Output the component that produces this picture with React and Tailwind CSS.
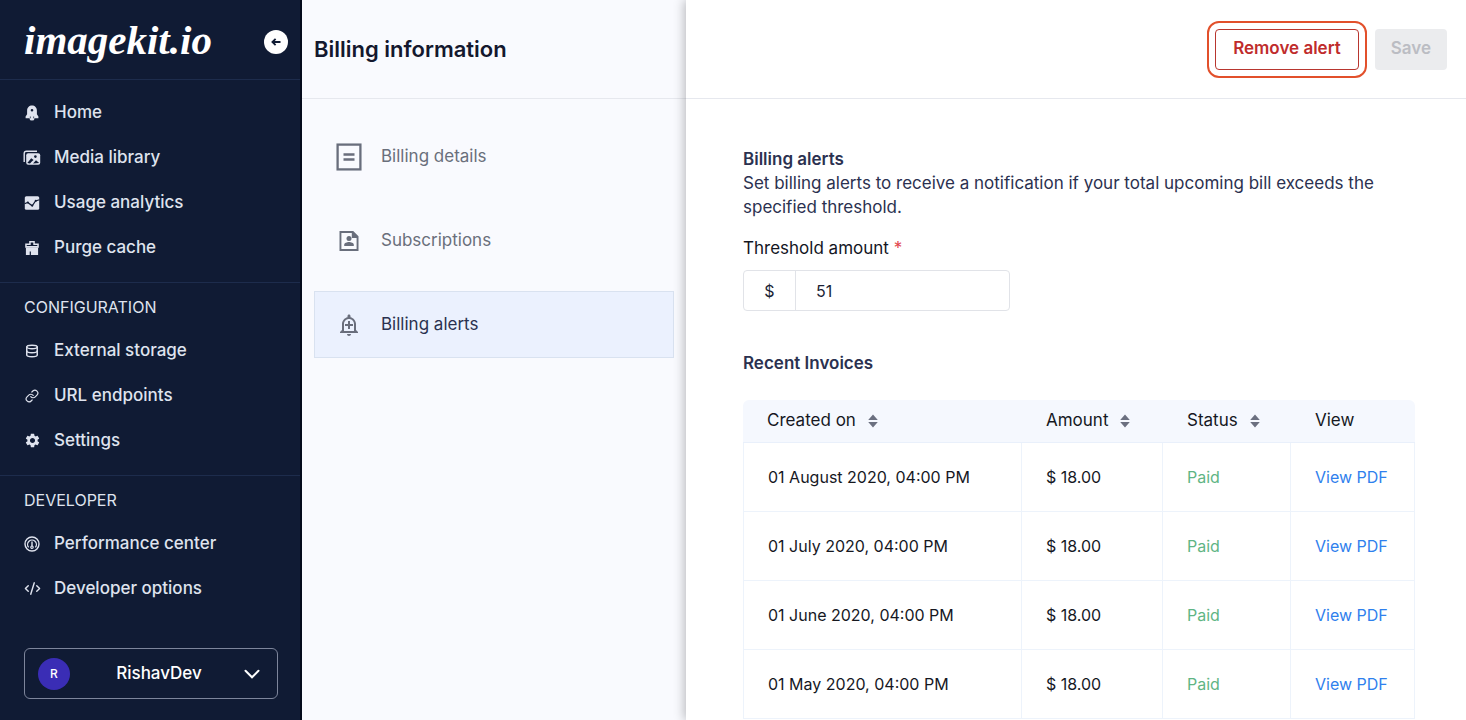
import { Link as LinkIcon, CodeXml, Database } from "lucide-react";
import { MdSettings, MdOutlineAddAlert } from "react-icons/md";

function HomeIcon() {
  return (
    <svg viewBox="0 0 16 16" className="size-4" fill="currentColor" aria-hidden="true">
      <path fillRule="evenodd" d="M8 .6c2.800 0 4.900 2.100 4.900 5v3.700l1.500 2.200v1.800h-4V14a2.400 1.600 0 0 1-4.800 0v-.7h-4v-1.800l1.500-2.200V5.600C3.100 2.700 5.200.6 8 .6Zm0 3.300a1.300 1.300 0 1 0 0 2.600 1.300 1.300 0 0 0 0-2.600ZM5.900 11.600h.7v1.700h-.7zm3.500 0h.7v1.700h-.7z" />
    </svg>
  );
}

function MediaIcon() {
  return (
    <svg viewBox="0 0 18 16" className="h-4 w-[18px] shrink-0" fill="none" aria-hidden="true">
      <path d="M1.200 12V3.500A2.300 2.300 0 0 1 3.500 1.200H14" stroke="currentColor" strokeWidth="1.400" />
      <rect x="3.200" y="3.200" width="14" height="11.600" rx="2" fill="currentColor" />
      <circle cx="12.400" cy="6.600" r="1.300" fill="#101b34" />
      <path d="m4.300 13 3.900-4.700 2.400 1.600-1.800 1.600L7 13.400ZM10 13.400l3-3.200 3.200 2.700Z" fill="#101b34" />
    </svg>
  );
}

function AnalyticsIcon() {
  return (
    <svg viewBox="0 0 16 16" className="size-4" aria-hidden="true">
      <rect x=".8" y="1.200" width="14.400" height="13.600" rx="1.500" fill="currentColor" />
      <path d="M.5 8.800 3.700 7.400 8.200 10.800l3.300-4.800 4-1.200" fill="none" stroke="#101b34" strokeWidth="1.200" />
      <circle cx="3.900" cy="7.600" r="1" fill="#101b34" />
      <circle cx="8.200" cy="10.500" r="1.100" fill="#101b34" />
      <circle cx="11.800" cy="5.800" r="1.100" fill="#101b34" />
    </svg>
  );
}

function PurgeIcon() {
  return (
    <svg viewBox="0 0 16 16" className="size-4" fill="currentColor" aria-hidden="true">
      <path fillRule="evenodd" d="M5.200 1h5.600v2.600h4v4.100H1.200V3.600h4V1Zm1.500 1.400v2.700h-4v1h10.600v-1h-4V2.400H6.700Z" />
      <path d="M1.900 7.500h12.200V15H6.900v-3.600H5.700V15H1.900z" />
    </svg>
  );
}

function GaugeIcon() {
  return (
    <svg viewBox="0 0 16 16" className="size-4" fill="none" stroke="currentColor" aria-hidden="true">
      <circle cx="8" cy="8" r="7" strokeWidth="1.400" />
      <path d="M4.600 11.300a4.400 4.400 0 1 1 6.800 0" strokeWidth="1.300" />
      <path d="M8 5.500v5" strokeWidth="1.400" />
      <circle cx="8" cy="11.200" r="1.200" strokeWidth="1.200" />
    </svg>
  );
}

function DetailsIcon() {
  return (
    <svg viewBox="0 0 26 28" className="h-7 w-[26px]" fill="none" stroke="currentColor" strokeWidth="2.300" aria-hidden="true">
      <rect x="1.600" y="1.600" width="22.800" height="24.800" />
      <path d="M7.500 11.500h11M7.500 16.500h11" />
    </svg>
  );
}

function SubscriptionIcon() {
  return (
    <svg viewBox="0 0 20 22" className="h-[22px] w-5" fill="currentColor" aria-hidden="true">
      <path fillRule="evenodd" d="M.5 1h13.700l5.300 5.300V21H.5V1Zm1.900 1.900v16.200h15.200V8h-4.800V2.900H2.400Z" />
      <circle cx="10" cy="8.600" r="2.500" />
      <path d="M5.200 16v-1.200c0-1.800 2.800-2.700 4.800-2.700s4.800.9 4.800 2.700V16z" />
    </svg>
  );
}

function SortIcon() {
  return (
    <svg viewBox="0 0 10 14" className="h-[14px] w-[10px]" fill="#6b7080" aria-hidden="true">
      <path d="M5 .5 9.800 6H.2zM5 13.500 9.800 8H.2z" />
    </svg>
  );
}

function NavItem({ icon, children }) {
  return (
    <li>
      <a href="#" className="flex h-[45px] items-center gap-[14px] px-6 text-[17px] font-medium text-[#dfe3ee]">
        <span className="flex w-4 shrink-0 justify-center">{icon}</span>
        {children}
      </a>
    </li>
  );
}

function NavSection({ title, children }) {
  return (
    <section className="border-t border-[#1d2c4c] pb-3 pt-3">
      <h2 className="mb-[9px] px-6 text-base leading-6 text-[#dfe3ee]">{title}</h2>
      <ul>{children}</ul>
    </section>
  );
}

function Sidebar() {
  return (
    <aside className="flex w-[302px] shrink-0 flex-col border-r-2 border-[#050b1c] bg-[#101b34]">
      <div className="flex h-[79px] items-center justify-between pl-6 pr-3">
        <a href="#" className="font-['Liberation_Serif',serif] text-[41px] font-bold italic leading-[48px] text-white">
          imagekit.io
        </a>
        <button type="button" aria-label="Collapse sidebar" className="mt-1 flex size-6 items-center justify-center rounded-full bg-white text-[#101b34]">
          <svg viewBox="0 0 12 12" className="size-3" fill="none" stroke="currentColor" strokeWidth="1.800" aria-hidden="true">
            <path d="M10.500 6H3M5.600 2.800 2.400 6l3.200 3.200" />
          </svg>
        </button>
      </div>
      <nav>
        <ul className="border-t border-[#1d2c4c] pb-3 pt-[10px]">
          <NavItem icon={<HomeIcon />}>Home</NavItem>
          <NavItem icon={<MediaIcon />}>Media library</NavItem>
          <NavItem icon={<AnalyticsIcon />}>Usage analytics</NavItem>
          <NavItem icon={<PurgeIcon />}>Purge cache</NavItem>
        </ul>
        <NavSection title="CONFIGURATION">
          <NavItem icon={<Database className="size-[14px]" strokeWidth={2.500} />}>External storage</NavItem>
          <NavItem icon={<LinkIcon className="size-[14px]" strokeWidth={2} />}>URL endpoints</NavItem>
          <NavItem icon={<MdSettings className="size-[17px] shrink-0" />}>Settings</NavItem>
        </NavSection>
        <NavSection title="DEVELOPER">
          <NavItem icon={<GaugeIcon />}>Performance center</NavItem>
          <NavItem icon={<CodeXml className="size-[17px] shrink-0" strokeWidth={2} />}>Developer options</NavItem>
        </NavSection>
      </nav>
      <button type="button" className="mb-5 ml-6 mr-[22px] mt-[25px] flex h-[51px] items-center justify-between rounded-md border border-[#7d859b] px-[13px] text-[17px] font-medium text-white">
        <span className="flex size-8 items-center justify-center rounded-full bg-[#3a2db5] text-xs">R</span>
        <span className="pl-2">RishavDev</span>
        <svg viewBox="0 0 24 24" className="size-6" fill="none" stroke="currentColor" strokeWidth="2" strokeLinecap="round" aria-hidden="true">
          <path d="m5.500 8.800 6.500 6.500 6.500-6.500" />
        </svg>
      </button>
    </aside>
  );
}

function Tab({ icon, active, children }) {
  return (
    <a
      href="#"
      aria-current={active ? "page" : undefined}
      className={
        active
          ? "flex h-[67px] items-center gap-4 border border-[#d9e2f0] bg-[#ebf1fe] px-[18px] text-[17px] text-[#2a3150]"
          : "flex h-[67px] items-center gap-4 border border-transparent px-[18px] text-[17px] text-[#6a6f7b]"
      }
    >
      <span className="flex w-8 shrink-0 justify-center text-[#696e7c]">{icon}</span>
      {children}
    </a>
  );
}

function BillingPanel() {
  return (
    <section className="w-[384px] shrink-0 bg-[#f9fafe]">
      <header className="flex h-[99px] items-center border-b border-[#e6e8ee] px-3">
        <h1 className="text-[22px] font-semibold leading-7 text-[#14182e]">Billing information</h1>
      </header>
      <nav className="flex flex-col gap-[17px] px-3 pt-6">
        <Tab icon={<DetailsIcon />}>Billing details</Tab>
        <Tab icon={<SubscriptionIcon />}>Subscriptions</Tab>
        <Tab icon={<MdOutlineAddAlert className="size-6" />} active>
          Billing alerts
        </Tab>
      </nav>
    </section>
  );
}

const invoices = [
  { date: "01 August 2020, 04:00 PM", amount: "$ 18.00" },
  { date: "01 July 2020, 04:00 PM", amount: "$ 18.00" },
  { date: "01 June 2020, 04:00 PM", amount: "$ 18.00" },
  { date: "01 May 2020, 04:00 PM", amount: "$ 18.00" },
];

function SortHeader({ children }) {
  return (
    <button type="button" className="flex items-center gap-3">
      {children}
      <SortIcon />
    </button>
  );
}

function InvoiceTable() {
  return (
    <table className="w-full table-fixed border-separate border-spacing-0 text-left text-base text-[#16181f]">
      <colgroup>
        <col />
        <col className="w-[141px]" />
        <col className="w-[128px]" />
        <col className="w-[124px]" />
      </colgroup>
      <thead className="bg-[#f5f8fe] text-[17px]">
        <tr className="h-[43px]">
          <th className="rounded-tl-md border-b border-[#e9f0fb] pl-6 font-normal"><SortHeader>Created on</SortHeader></th>
          <th className="border-b border-[#e9f0fb] pl-6 font-normal"><SortHeader>Amount</SortHeader></th>
          <th className="border-b border-[#e9f0fb] pl-6 font-normal"><SortHeader>Status</SortHeader></th>
          <th className="rounded-tr-md border-b border-[#e9f0fb] pl-6 font-normal">View</th>
        </tr>
      </thead>
      <tbody>
        {invoices.map((invoice) => (
          <tr key={invoice.date} className="h-[69px]">
            <td className="border-x border-b border-[#edf3fb] pl-6">{invoice.date}</td>
            <td className="border-b border-r border-[#edf3fb] pl-6">{invoice.amount}</td>
            <td className="border-b border-r border-[#edf3fb] pl-6 text-[#5fb584]">Paid</td>
            <td className="border-b border-r border-[#edf3fb] pl-6">
              <a href="#" className="text-[#2f80ed]">View PDF</a>
            </td>
          </tr>
        ))}
      </tbody>
    </table>
  );
}

function AlertSettings() {
  return (
    <main className="relative min-w-0 flex-1 bg-white shadow-[-2px_0_10px_rgba(0,0,0,0.250)]">
      <header className="flex h-[99px] items-center justify-end gap-2 border-b border-[#e6e8ee] pr-[19px]">
        <div className="rounded-xl border-2 border-[#e2502b] p-[6px]">
          <button type="button" className="h-[41px] rounded border border-[#b8362f] px-[17px] text-[17px] font-semibold text-[#bf2c2c]">
            Remove alert
          </button>
        </div>
        <button type="button" disabled className="h-[41px] rounded bg-[#ebecee] px-4 text-[17px] font-semibold text-[#bbbdc3]">
          Save
        </button>
      </header>
      <div className="pl-[57px] pr-[51px] pt-12">
        <section className="text-[17px] text-[#2b3150]">
          <h2 className="font-semibold leading-6">Billing alerts</h2>
          <p className="max-w-[660px] leading-6">
            Set billing alerts to receive a notification if your total upcoming bill exceeds the specified threshold.
          </p>
        </section>
        <label htmlFor="threshold" className="mt-[17px] block text-[17px] leading-6 text-[#14161f]">
          Threshold amount <span className="text-[#e2434b]">*</span>
        </label>
        <div className="mt-[10px] flex h-[41px] w-[267px] rounded-sm border border-[#e1e3e8] text-base text-[#1b1f35]">
          <span className="flex w-[52px] items-center justify-center border-r border-[#e1e3e8]">$</span>
          <input id="threshold" type="text" defaultValue="51" className="min-w-0 flex-1 px-5 outline-none" />
        </div>
        <h2 className="mb-[25px] mt-10 text-[17px] font-semibold leading-6 text-[#2b3150]">Recent Invoices</h2>
        <InvoiceTable />
      </div>
    </main>
  );
}

export default function App() {
  return (
    <div className="flex min-h-screen font-['Inter',sans-serif]">
      <Sidebar />
      <BillingPanel />
      <AlertSettings />
    </div>
  );
}
